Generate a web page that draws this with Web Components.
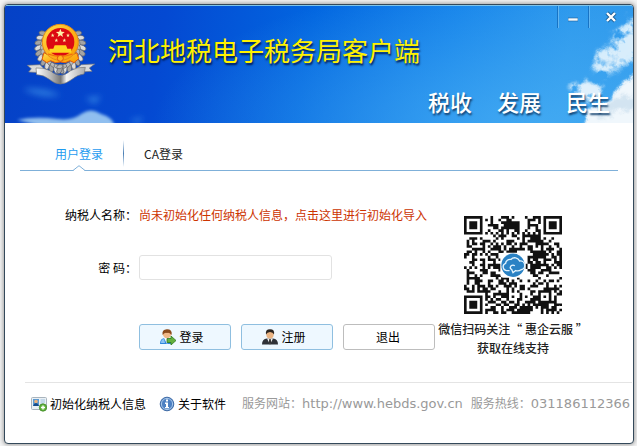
<!DOCTYPE html>
<html lang="zh-CN">
<head>
<meta charset="utf-8">
<title>河北地税电子税务局客户端</title>
<style>
  body {
    margin: 0;
    background: #f4f4f4;
    color: #000;
    font: 12px/18px "Noto Sans CJK SC", sans-serif;
  }
</style>
</head>
<body>
<client-window>
  <title-banner slot="banner" heading="河北地税电子税务局客户端"></title-banner>
  <login-tabs></login-tabs>
  <section-row>
    <login-form></login-form>
    <qr-card slot="aside">
      <span>微信扫码关注“ 惠企云服 ”</span>
      <span>获取在线支持</span>
    </qr-card>
  </section-row>
  <client-footer slot="footer"></client-footer>
</client-window>

<script>
class BaseElement extends HTMLElement {
  constructor() {
    super();
    this.attachShadow({ mode: 'open' }).innerHTML =
      '<style>*{box-sizing:border-box}</style>' + this.render();
  }
}

customElements.define('client-window', class extends BaseElement {
  render() { return `
    <style>
      :host { display: flex; min-height: 100vh; padding: 4px 3px 2px 4px; box-sizing: border-box; }
      .frame {
        flex: 1; display: flex; flex-direction: column; min-width: 0;
        border: 1px solid #34495a; border-radius: 4px; background: #fff;
        box-shadow: 0 0 4px 1px #a0a0a0; overflow: hidden;
      }
      main { flex: 1; }
    </style>
    <div class="frame">
      <slot name="banner"></slot>
      <main><slot></slot></main>
      <slot name="footer"></slot>
    </div>`; }
});

customElements.define('tax-emblem', class extends BaseElement {
  render() {
    let leaves = '';
    for (let i = 0; i < 11; i++) {
      const a = (-38 + i * 13) * Math.PI / 180;
      for (const s of [-1, 1]) {
        const x = 109 + s * Math.cos(a) * 66, y = 88 + Math.sin(a) * 68;
        const r = s * (i * 13 - 12);
        leaves += `<ellipse cx="${x.toFixed(1)}" cy="${y.toFixed(1)}" rx="12" ry="7" fill="${i % 2 ? '#dcdcdc' : '#a4a4a4'}" stroke="#5b5f6b" stroke-width="2" transform="rotate(${r} ${x.toFixed(1)} ${y.toFixed(1)})"/>`;
        const x2 = 109 + s * Math.cos(a) * 54, y2 = 88 + Math.sin(a) * 58;
        leaves += `<ellipse cx="${x2.toFixed(1)}" cy="${y2.toFixed(1)}" rx="9" ry="6" fill="#b9b9b9" stroke="#666" stroke-width="2" transform="rotate(${r + s * 50} ${x2.toFixed(1)} ${y2.toFixed(1)})"/>`;
      }
    }
    const star = (x, y, r) => {
      let p = '';
      for (let i = 0; i < 10; i++) {
        const q = i % 2 ? r * 0.42 : r, a = -Math.PI / 2 + i * Math.PI / 5;
        p += (x + q * Math.cos(a)).toFixed(1) + ',' + (y + q * Math.sin(a)).toFixed(1) + ' ';
      }
      return `<polygon points="${p}" fill="#fff2a8"/>`;
    };
    return `
    <style>:host{display:block;width:74px;height:70px} svg{display:block;width:100%;height:100%}</style>
    <svg viewBox="0 0 222 210" role="img" aria-label="税徽">
      <defs>
        <linearGradient id="g" x1="0" y1="0" x2="1" y2="1"><stop offset="0" stop-color="#ffe14a"/><stop offset=".5" stop-color="#ffb21c"/><stop offset="1" stop-color="#f7a000"/></linearGradient>
        <linearGradient id="s" x1="0" y1="0" x2="1" y2="0"><stop offset="0" stop-color="#fff"/><stop offset=".3" stop-color="#b9b9b9"/><stop offset=".5" stop-color="#777"/><stop offset=".62" stop-color="#f4f4f4"/><stop offset="1" stop-color="#aaa"/></linearGradient>
      </defs>
      ${leaves}
      <path d="M10 142 L48 140 L58 150 L52 164 L14 162 L22 152Z M212 138 L172 140 L160 150 L166 162 L204 160 L196 150Z" fill="#d9d9d9" stroke="#75777d" stroke-width="2"/>
      <path d="M36 150 Q60 148 78 158 Q96 172 109 172 Q124 172 140 158 Q160 146 184 148 L180 168 Q160 170 144 184 Q126 198 109 198 Q92 198 76 184 Q60 170 38 170Z" fill="url(#s)" stroke="#777" stroke-width="2"/>
      <path d="M60 104 L82 116 L136 116 L158 104 L164 122 L150 134 L138 128 L124 134 L109 132 L94 134 L80 128 L68 134 L54 124Z" fill="url(#g)" stroke="#e45a0a" stroke-width="3"/>
      <circle cx="109" cy="73" r="54" fill="url(#g)" stroke="#e88a18" stroke-width="3"/>
      <circle cx="109" cy="72" r="42" fill="#dc0a12"/>
      ${star(109, 46, 14)}${star(86, 52, 6)}${star(132, 52, 6)}${star(97, 67, 6)}${star(121, 67, 6)}
      <path d="M92 82 L126 82 L130 92 L142 92 L142 104 L76 104 L76 92 L88 92Z" fill="#ffd51e"/>
      <path d="M72 108 Q109 122 146 108" fill="none" stroke="#f06a10" stroke-width="4"/>
      <circle cx="109" cy="121" r="9" fill="#ffb51e" stroke="#e65a0c" stroke-width="3"/>
    </svg>`;
  }
});

customElements.define('title-banner', class extends BaseElement {
  render() { return `
    <style>
      :host { display: block; }
      header {
        position: relative; overflow: hidden; height: 118px;
        display: grid; grid-template-columns: auto 1fr auto; grid-template-rows: 66px 1fr;
        background:
          radial-gradient(ellipse 380px 150px at 84% 105%, rgba(74,176,244,.75), rgba(58,160,240,0) 100%),
          linear-gradient(100deg, #0541c6 0%, #0449d2 25%, #0266e0 48%, #1482ea 70%, #2b97ec 88%, #2e97ea 100%);
        border-top: 1px solid #7fc4ea;
      }
      .sky { position: absolute; bottom: 0; height: 118px; }
      .left { left: 0; width: 150px; }
      .right { right: 0; width: 170px; }
      .brand { position: relative; display: flex; align-items: center; gap: 10px; padding: 12px 0 0 19px; height: 82px; }
      h1 { margin: 0; padding-bottom: 7px; font-size: 26px; line-height: 34px; font-weight: 400; color: #fff200; text-shadow: 1px 2px 2px #001a50; white-space: nowrap; }
      .controls { position: relative; grid-column: 3; display: flex; align-items: flex-start; }
      button {
        width: 31px; height: 22px; padding: 0; border: 0; background: none;
        border-left: 1px solid #1873c4; box-shadow: inset 1px 0 #62b6f2; display: grid; place-items: center;
      }
      button:last-child { width: 45px; }
      button svg { display: block; }
      .slogan { position: relative; grid-column: 1 / -1; display: flex; justify-content: flex-end; gap: 25px; padding: 12px 23px 0 0;
        font-size: 22px; line-height: 34px; font-weight: 500; color: #fff; text-shadow: 1px 2px 2px #12406e; }
    </style>
    <header>
      <svg class="sky left" viewBox="0 0 150 118" aria-hidden="true">
        <defs>
          <filter id="b"><feGaussianBlur stdDeviation="1.4"/></filter>
          <filter id="b2" x="-30%" y="-80%" width="160%" height="260%"><feGaussianBlur stdDeviation="3"/></filter>
        </defs>
        <g filter="url(#b)">
          <path d="M12 115 Q30 111 52 114 Q68 116 76 109 Q86 102 96 109 Q108 112 110 122 L40 122Z" fill="#a8d4f5" opacity=".85"/>
        </g>
        <g filter="url(#b2)">
          <path d="M18 84 Q36 82 56 90 Q36 94 18 84Z M80 93 L96 91 L90 99Z M124 116 L138 112 L134 118Z" fill="#3f94ea" opacity=".7"/>
        </g>
      </svg>
      <svg class="sky right" viewBox="0 0 170 118" aria-hidden="true">
        <defs>
          <filter id="c" x="-10%" y="-10%" width="120%" height="120%">
            <feGaussianBlur in="SourceGraphic" stdDeviation="2" result="s"/>
            <feTurbulence type="fractalNoise" baseFrequency=".075" numOctaves="4" seed="9" result="n"/>
            <feDisplacementMap in="s" in2="n" scale="14" xChannelSelector="R" yChannelSelector="G" result="d"/>
            <feColorMatrix in="n" values="0 0 0 0 1  0 0 0 0 1  0 0 0 0 1  0 5 0 0 -1.5" result="m"/>
            <feComposite in="d" in2="m" operator="in"/>
          </filter>
          <filter id="e" x="-10%" y="-10%" width="120%" height="120%">
            <feGaussianBlur in="SourceGraphic" stdDeviation="1.5" result="s"/>
            <feTurbulence type="fractalNoise" baseFrequency=".09" numOctaves="4" seed="4" result="n"/>
            <feDisplacementMap in="s" in2="n" scale="12" xChannelSelector="R" yChannelSelector="G"/>
          </filter>
        </defs>
        <g filter="url(#c)">
          <path d="M178 8 L164 17 L155 28 L149 27 L151 40 L138 44 L130 54 L132 66 L142 72 L150 66 L160 62 L178 54Z" fill="#d6edfc"/>
          <path d="M104 80 L120 76 L136 80 L138 94 L124 98 L112 88Z" fill="#dff0fc"/>
        </g>
        <g filter="url(#e)">
          <path d="M178 22 L168 28 L160 34 L166 42 L154 48 L148 46 L140 52 L134 56 L146 62 L158 56 L178 46Z" fill="#d9edfb" opacity=".65"/>
          <path d="M178 66 L164 76 L154 84 L146 96 L126 104 L120 124 L178 124Z" fill="#f0f7fc"/>
          <path d="M152 92 Q162 88 178 94 L172 104 L152 107 L134 114Z" fill="#c6dcec" opacity=".7"/>
        </g>
      </svg>
      <div class="brand"><tax-emblem></tax-emblem><h1></h1></div>
      <div class="controls">
        <button type="button" aria-label="最小化"><svg width="10" height="12" viewBox="0 0 10 12"><path d="M0 7h10v3H0z" fill="#f4fbff" stroke="#1c5d94" stroke-width=".6"/></svg></button>
        <button type="button" aria-label="关闭"><svg width="12" height="12" viewBox="0 0 12 12"><path d="M2 2l8 8M10 2l-8 8" stroke="#1c5d94" stroke-width="4"/><path d="M2 2l8 8M10 2l-8 8" stroke="#fff" stroke-width="2.4"/></svg></button>
      </div>
      <div class="slogan"><span>税收</span><span>发展</span><span>民生</span></div>
    </header>`; }
  connectedCallback() {
    this.shadowRoot.querySelector('h1').textContent = this.getAttribute('heading');
  }
});

customElements.define('login-tabs', class extends BaseElement {
  render() { return `
    <style>
      :host { display: block; padding: 16px 15px 0; }
      nav { display: flex; border-bottom: 1px solid #7fb0d9; padding-left: 15px; height: 32px; }
      button { position: relative; border: 0; background: none; padding: 0 20px 2px; font: inherit; color: #222; }
      button[aria-selected=true] { color: #1e9bf0; }
      i { width: 1px; height: 27px; margin-top: 1px; background: linear-gradient(#fff, #4a7fb5, #fff); }
      svg { position: absolute; left: 50%; bottom: -1px; margin-left: -6px; }
    </style>
    <nav role="tablist">
      <button type="button" role="tab" aria-selected="true">用户登录
        <svg width="12" height="6" viewBox="0 0 12 6" aria-hidden="true"><path d="M0 6L6 0l6 6z" fill="#fff"/><path d="M0 5.5L6 .7l6 4.8" fill="none" stroke="#7fb0d9"/></svg>
      </button><i></i>
      <button type="button" role="tab" aria-selected="false">CA登录</button>
    </nav>`; }
});

customElements.define('section-row', class extends BaseElement {
  render() { return `
    <style>:host{display:flex;align-items:flex-start;padding:35px 15px 0 60px;gap:5px}</style>
    <slot></slot><slot name="aside"></slot>`; }
});

customElements.define('user-icon', class extends BaseElement {
  render() { return `
    <style>
      :host{display:block;width:16px;height:16px} svg{display:none}
      :host([kind=login]) .login, :host([kind=register]) .register,
      :host([kind=card]) .card, :host([kind=info]) .info {display:block}
    </style>
    <svg class="login" width="16" height="16" viewBox="0 0 16 16">
      <path d="M0 15q0-6 5-6h4q3 0 3 6z" fill="#2f86dc"/><path d="M1 14q0-4 3-4l1 4z" fill="#8cc4f4"/><path d="M4 9l3 6 3-6z" fill="#f3f8ff"/>
      <circle cx="7" cy="5" r="4.2" fill="#f0b888"/><path d="M2.600 6Q1.600 .5 7 .3q5.600 0 4.600 5.700Q9 3 7 4 5 3 2.600 6z" fill="#8a4a1c"/>
      <path d="M7 9.500h4V7l5 4.500L11 16v-2.500H7z" fill="#62b13e" stroke="#2e7a1c" stroke-width=".8"/>
    </svg>
    <svg class="register" width="16" height="16" viewBox="0 0 16 16">
      <path d="M0 15.500Q0 10 5 9.500h6q5 .5 5 6z" fill="#2f3238"/><path d="M5 9.500l3 6 3-6z" fill="#f2f2f2"/><path d="M7.300 10h1.400l.6 4L8 15.800 6.700 14z" fill="#333"/>
      <ellipse cx="8" cy="5.300" rx="3.700" ry="4.300" fill="#eab483"/><path d="M4 5.500Q3 .2 8 .2t4 5.300Q11 3 8 3T4 5.500z" fill="#2a2420"/>
    </svg>
    <svg class="card" width="16" height="16" viewBox="0 0 16 16">
      <rect x=".5" y="1.500" width="15" height="12" rx="1" fill="#eaf0f5" stroke="#a9b4bd"/><rect x="2" y="3" width="6" height="7" fill="#5a9bd4"/>
      <circle cx="5" cy="5.500" r="1.800" fill="#ecb07a"/><path d="M2 10q1-3 3-3t3 3z" fill="#174c8a"/><path d="M9.500 4h4.500M9.500 6h4.500M9.500 8h3" stroke="#9dc0dd"/>
      <circle cx="12" cy="11.500" r="3.700" fill="#62b33d" stroke="#38811f" stroke-width=".7"/><path d="M12 9.500v4M10 11.500h4" stroke="#fff" stroke-width="1.400"/>
    </svg>
    <svg class="info" width="16" height="16" viewBox="0 0 16 16">
      <circle cx="8" cy="8" r="6.800" fill="#4c80c2" stroke="#406ca6"/><circle cx="8" cy="8" r="5.600" fill="none" stroke="#a8c6e8"/>
      <path d="M7 3.500h2v2H7zM6 6.500h3v4.500h1v1.300H6V11h1V8H6z" fill="#fff"/>
    </svg>`; }
});

customElements.define('login-form', class extends BaseElement {
  render() { return `
    <style>
      form { display: grid; grid-template-columns: 72px auto; column-gap: 2px; align-items: center; }
      label, .name { text-align: right; white-space: nowrap; }
      a { color: #cc3300; text-decoration: none; white-space: nowrap; }
      input { width: 193px; height: 25px; margin: 31px 0 44px; border: 1px solid #e2e2e2; border-radius: 3px; background: #fff; font: inherit; padding: 0 6px; }
      label { margin: 18px 0 30px; }
      .actions { grid-column: 2; display: flex; gap: 10px; }
      button { width: 92px; height: 26px; display: flex; align-items: center; justify-content: center; gap: 3px; padding: 0 6px 0 0;
        font: inherit; color: #000; border: 1px solid #8fbfe0; border-radius: 3px; background: #eef8ff; }
      .plain { background: #fff; border-color: #bdbdbd; padding: 0 2px 0 0; }
    </style>
    <form>
      <span class="name">纳税人名称：</span><a href="#init">尚未初始化任何纳税人信息，点击这里进行初始化导入</a>
      <label for="pw">密 码：</label><input id="pw" type="password">
      <div class="actions">
        <button type="button"><user-icon kind="login"></user-icon>登录</button>
        <button type="button"><user-icon kind="register"></user-icon>注册</button>
        <button type="button" class="plain">退出</button>
      </div>
    </form>`; }
});

customElements.define('qr-card', class extends BaseElement {
  render() {
    const n = 37;
    let seed = 20177, d = '';
    const rnd = () => (seed = (seed * 1103515245 + 12345) % 2147483648) / 2147483648;
    const ring = (x, y, cx, cy) => Math.max(Math.abs(x - cx), Math.abs(y - cy));
    for (let y = 0; y < n; y++) for (let x = 0; x < n; x++) {
      let on = rnd() > 0.49;
      if (x === 6) on = y % 2 === 0;
      if (y === 6) on = x % 2 === 0;
      const al = ring(x, y, 30, 30);
      if (al <= 2) on = al !== 1;
      for (const [cx, cy] of [[3, 3], [33, 3], [3, 33]]) {
        const r = ring(x, y, cx, cy);
        if (r <= 4) on = r === 3 || r <= 1;
      }
      if (on) d += `M${x} ${y}h1v1h-1z`;
    }
    return `
    <style>
      :host { display: flex; flex-direction: column; align-items: center; width: 146px; padding-top: 10px; line-height: 19px; font-weight: 500; color: #222; white-space: nowrap; }
      svg { width: 98px; height: 98px; margin-bottom: 5px; }
    </style>
    <svg viewBox="0 0 37 37" role="img" aria-label="二维码">
      <path d="${d}" fill="#111"/>
      <rect x="13.700" y="13.900" width="9.600" height="9.400" rx="1.200" fill="#fff"/>
      <circle cx="18.500" cy="18.600" r="4.400" fill="#2a82c4"/>
      <path d="M17.200 20.600h-1.200a1.400 1.400 0 0 1-.3-2.700 1.700 1.700 0 0 1 2-1.500 2 2 0 0 1 3.300.6 1.600 1.600 0 0 1 .5 3.300q-.8.600-2 .3l-1 .8-.5-1.200q-.9-.5-.3-1.300.7-.6 1.500-.1" fill="none" stroke="#e4f5ff" stroke-width=".5"/>
    </svg>
    <slot></slot>`;
  }
});

customElements.define('client-footer', class extends BaseElement {
  render() { return `
    <style>
      :host { display: block; padding: 0 1px 30px 20px; }
      footer { display: flex; align-items: center; border-top: 1px solid #e4e4e4; padding: 11px 0 0 6px; white-space: nowrap; }
      a { color: #000; text-decoration: none; display: flex; align-items: center; gap: 3px; margin-right: 13px; }
      .info { color: #999; margin: 0 8px 0 3px; }
      .info a { display: inline; color: inherit; margin: 0; }
      .info:last-child { margin: 0; }
      .latin { font-family: "DejaVu Sans", sans-serif; font-size: 13px; }
    </style>
    <footer>
      <a href="#init"><user-icon kind="card"></user-icon>初始化纳税人信息</a>
      <a href="#about"><user-icon kind="info"></user-icon>关于软件</a>
      <span class="info">服务网站：<a class="latin" href="#site">http://www.hebds.gov.cn</a></span>
      <span class="info">服务热线：<span class="latin">031186112366</span></span>
    </footer>`; }
});
</script>
</body>
</html>
